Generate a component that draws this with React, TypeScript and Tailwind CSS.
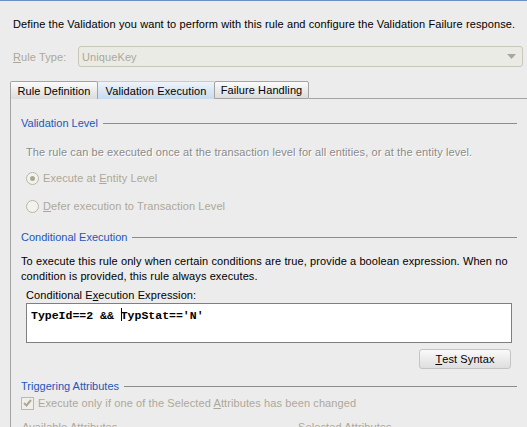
import React from "react";

const font = { fontFamily: '"Liberation Sans", Arial, sans-serif' };

function SectionHeader({ title }: { title: string }) {
  return (
    <div className="flex items-center gap-[5px] pr-[10px] h-[14px] leading-[14px]">
      <span className="text-[#2456b8] whitespace-nowrap tracking-normal">{title}</span>
      <div className="flex-1 h-px bg-[#8c8c8c]" />
    </div>
  );
}

function Radio({ checked }: { checked?: boolean }) {
  return (
    <span className="w-[13px] h-[13px] rounded-full border border-[#b9b6a8] bg-[#f3f3ee] flex items-center justify-center shrink-0">
      {checked && <span className="w-[5px] h-[5px] rounded-full bg-[#aca899]" />}
    </span>
  );
}

export default function App() {
  return (
    <div
      className="w-[527px] h-[427px] bg-[#ececec] overflow-hidden text-[11px] leading-[14px] tracking-[0.1px] text-black border-t border-[#6f8fc0]"
      style={font}
    >
      <div className="pl-[13px] pt-[16px] leading-[14px]">
        Define the Validation you want to perform with this rule and configure the Validation Failure response.
      </div>

      <div className="flex items-center pl-[13px] pr-[4px] mt-[15px]">
        <span className="w-[65px] text-[#aca899]">
          <span className="underline">R</span>ule Type:
        </span>
        <div className="flex-1 h-[21px] border border-[#c9c7ba] rounded-[3px] bg-[#ebebe6] flex items-center px-[3px] text-[#aca899]">
          <span className="flex-1">UniqueKey</span>
          <svg width="9" height="5" viewBox="0 0 9 5" className="mr-[3px]">
            <path d="M0 0 L9 0 L4.5 5 Z" fill="#a7a7a0" />
          </svg>
        </div>
      </div>

      <div className="mt-[14px] flex items-end pl-[10px]">
        <div className="h-[18px] w-[88px] border border-b-0 border-[#a3a3a3] rounded-t-[2px] bg-gradient-to-b from-[#fbfbfb] to-[#dcdcdc] flex items-center justify-center">
          Rule Definition
        </div>
        <div className="h-[18px] w-[116px] border-t border-[#c9c9c9] bg-gradient-to-b from-[#eef3f9] to-[#c8dbef] flex items-center justify-center">
          Validation Execution
        </div>
        <div className="h-[18px] w-[95px] border border-[#a3a3a3] rounded-t-[2px] bg-gradient-to-b from-[#fbfbfb] to-[#dcdcdc] flex items-center justify-center">
          Failure Handling
        </div>
        <div className="flex-1 border-b border-[#a3a3a3]" />
      </div>

      <div className="ml-[10px] border-l border-[#a3a3a3] h-[400px] pl-[10px] pt-[17px]">
        <SectionHeader title="Validation Level" />
        <div className="pl-[5px] mt-[15px] text-[#8a8a8a] [text-shadow:1px_1px_0_#ffffff]">
          The rule can be executed once at the transaction level for all entities, or at the entity level.
        </div>
        <div className="pl-[5px] mt-[12px] flex items-center gap-[4px] text-[#aca899] h-[14px]">
          <Radio checked />
          <span>
            Execute at <span className="underline">E</span>ntity Level
          </span>
        </div>
        <div className="pl-[5px] mt-[14px] flex items-center gap-[4px] text-[#aca899] h-[14px]">
          <Radio />
          <span>
            <span className="underline">D</span>efer execution to Transaction Level
          </span>
        </div>

        <div className="mt-[17px]">
          <SectionHeader title="Conditional Execution" />
        </div>
        <div className="mt-[10px] leading-[15px] pr-[12px]">
          To execute this rule only when certain conditions are true, provide a boolean expression. When no condition is provided, this rule always executes.
        </div>
        <div className="pl-[5px] mt-[4px]">
          Conditional E<span className="underline">x</span>ecution Expression:
        </div>
        <div className="ml-[5px] mr-[15px] mt-[1px] h-[40px] bg-white border border-[#7f7f7f] pl-[4px] pt-[4px]">
          <span
            className="font-bold text-[11.5px] whitespace-pre tracking-normal"
            style={{ fontFamily: '"Liberation Mono", "Courier New", monospace' }}
          >
            TypeId==2 &amp;&amp; <span className="inline-block w-px h-[13px] bg-black align-[-2px] -mr-px" />TypStat=='N'
          </span>
        </div>
        <div className="flex justify-end mr-[16px] mt-[6px]">
          <button className="w-[92px] h-[20px] border border-[#c4c4c4] rounded-[3px] bg-gradient-to-b from-[#fafafa] to-[#dedede] flex items-center justify-center">
            <span className="underline">T</span>est Syntax
          </button>
        </div>

        <div className="mt-[10px]">
          <SectionHeader title="Triggering Attributes" />
        </div>
        <div className="flex items-center gap-[4px] mt-[3px] h-[14px] text-[#aca899]">
          <span className="w-[13px] h-[13px] border border-[#bcb9ab] bg-[#f0f0ea] flex items-center justify-center shrink-0">
            <svg width="9" height="8" viewBox="0 0 9 8">
              <path d="M1 4 L3.5 6.5 L8 1" stroke="#aca899" strokeWidth="2" fill="none" />
            </svg>
          </span>
          <span>
            Execute only if one of the Selected <span className="underline">A</span>ttributes has been changed
          </span>
        </div>
        <div className="flex mt-[10px] text-[#aca899] pl-[1px]">
          <span className="w-[276px]">Available Attributes</span>
          <span>Selected Attributes</span>
        </div>
      </div>
    </div>
  );
}
